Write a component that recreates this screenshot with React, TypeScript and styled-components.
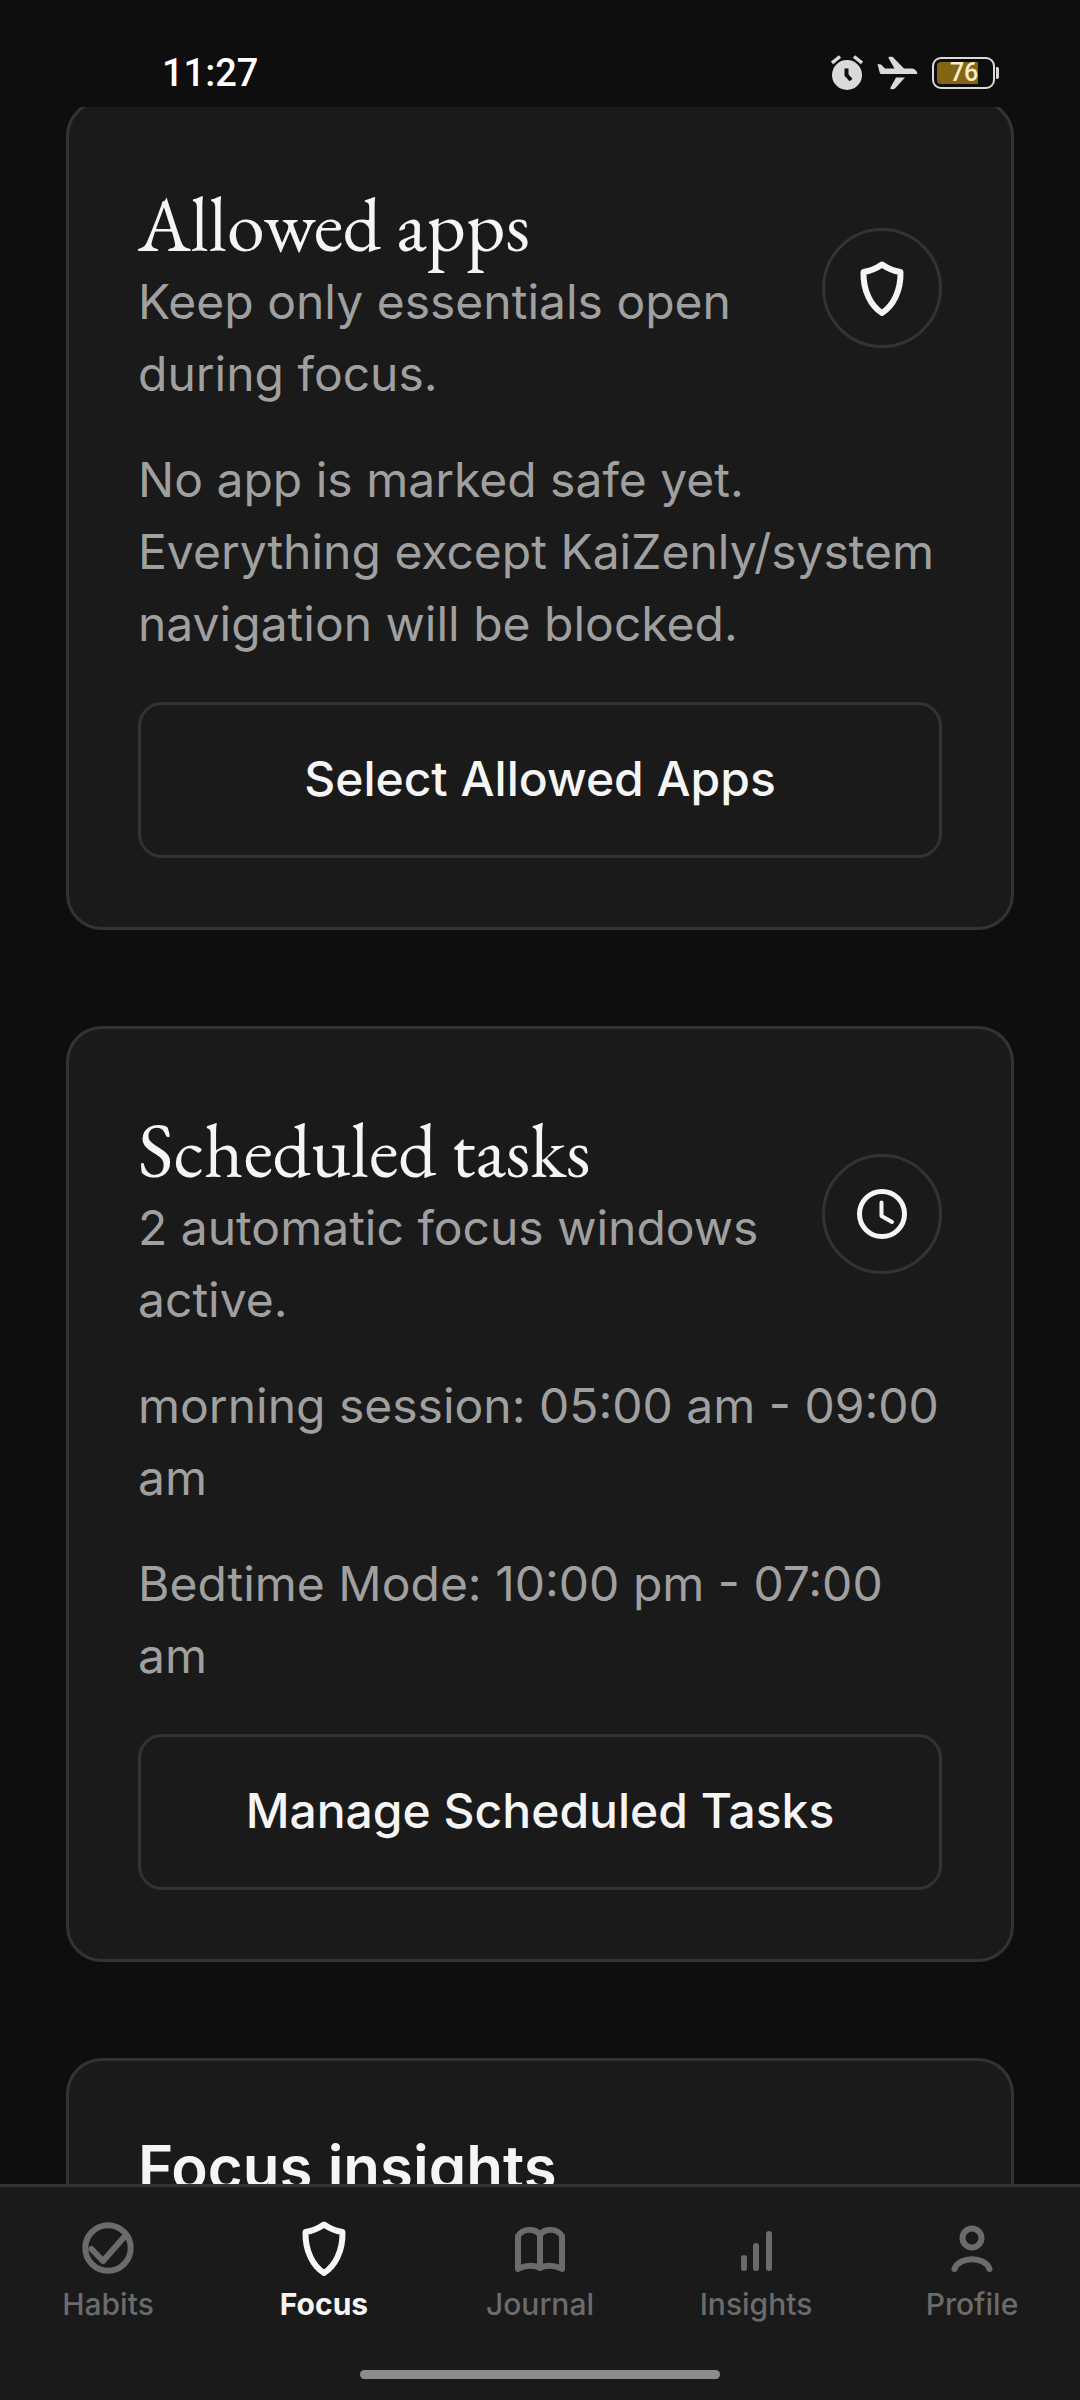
import React from "react";
import styled, { createGlobalStyle } from "styled-components";

const color = {
  page: "#0e0e0e",
  surface: "#1a1a1a",
  border: "#333333",
  text: "#f5f5f5",
  muted: "#a0a0a0",
  faint: "#6b6b6b",
  status: "#dadada",
};

const GlobalStyle = createGlobalStyle`
  *, *::before, *::after { box-sizing: border-box; }
  html, body, #root { height: 100%; }
  body {
    margin: 0;
    background: ${color.page};
    color: ${color.text};
    font-family: Inter, "Liberation Sans", sans-serif;
  }
  h2, p { margin: 0; }
`;

const Screen = styled.div`
  display: flex;
  flex-direction: column;
  height: 100vh;
  overflow: hidden;
`;

const StatusBar = styled.header`
  flex: none;
  display: flex;
  align-items: center;
  justify-content: space-between;
  height: 107px;
  padding: 38px 81px 0 162px;
  font-family: Roboto, "Liberation Sans", sans-serif;
`;

const Clock = styled.time`
  font-size: 38px;
  line-height: 44px;
  font-weight: 500;
  color: #ffffff;
`;

const StatusIcons = styled.div`
  display: flex;
  align-items: center;
  gap: 14px;
  color: ${color.status};
  svg { display: block; }
`;

const Battery = styled.div`
  display: flex;
  align-items: center;
  gap: 1px;
  &::after {
    content: "";
    width: 3px;
    height: 12px;
    border-radius: 0 2px 2px 0;
    background: ${color.status};
  }
`;

const BatteryCase = styled.div`
  width: 63px;
  height: 32px;
  padding: 3px;
  border: 2px solid ${color.status};
  border-radius: 9px;
`;

const BatteryLevel = styled.div`
  display: flex;
  align-items: center;
  justify-content: flex-end;
  width: 78%;
  height: 100%;
  border-radius: 4px 0 0 4px;
  background: #856414;
  color: #fbeccb;
  font-size: 25px;
  line-height: 22px;
  font-weight: 500;
`;

const Scroll = styled.main`
  flex: 1;
  min-height: 0;
  overflow: hidden;
`;

const CardList = styled.div`
  display: flex;
  flex-direction: column;
  gap: 96px;
  margin-top: -7px;
  padding: 0 66px;
`;

const Card = styled.section`
  padding: 69px;
  border: 3px solid ${color.border};
  border-radius: 36px;
  background: ${color.surface};
`;

const CardHeader = styled.div`
  display: flex;
  align-items: flex-start;
  gap: 36px;
`;

const Heading = styled.div`
  flex: 1;
  min-width: 0;
`;

const Title = styled.h2`
  padding-top: 10px;
  font-family: "EB Garamond", "Liberation Serif", serif;
  font-size: 76px;
  line-height: 84px;
  font-weight: 400;
`;

const SansTitle = styled.h2`
  font-size: 60px;
  line-height: 74px;
  font-weight: 600;
`;

const Text = styled.p`
  font-size: 48px;
  line-height: 72px;
  color: ${color.muted};
`;

const Notes = styled.div`
  display: flex;
  flex-direction: column;
  gap: 34px;
  padding: 34px 0 42px;
`;

const IconRing = styled.div`
  flex: none;
  display: grid;
  place-items: center;
  width: 120px;
  height: 120px;
  margin-top: 56px;
  border: 3px solid ${color.border};
  border-radius: 50%;
`;

const OutlineButton = styled.button`
  display: block;
  width: 100%;
  height: 156px;
  padding: 0 24px 3px;
  border: 3px solid ${color.border};
  border-radius: 24px;
  background: transparent;
  color: ${color.text};
  font: inherit;
  font-size: 48px;
  font-weight: 500;
  cursor: pointer;
`;

const TabBar = styled.nav`
  flex: none;
  display: flex;
  flex-direction: column;
  align-items: center;
  justify-content: space-between;
  height: 216px;
  padding: 28px 0 21px;
  border-top: 3px solid ${color.border};
  background: ${color.surface};
`;

const Tabs = styled.div`
  display: grid;
  grid-template-columns: repeat(5, 1fr);
  width: 100%;
`;

const Tab = styled.a<{ $active?: boolean }>`
  display: flex;
  flex-direction: column;
  align-items: center;
  gap: 5px;
  color: ${(p) => (p.$active ? color.text : color.faint)};
  font-size: 30px;
  line-height: 36px;
  font-weight: ${(p) => (p.$active ? 700 : 500)};
  text-decoration: none;
`;

const HomeIndicator = styled.div`
  width: 360px;
  height: 9px;
  border-radius: 5px;
  background: #8c8c8c;
`;

const StrokeIcon = styled.svg`
  display: block;
  width: 66px;
  height: 66px;
  fill: none;
  stroke: currentColor;
  stroke-width: 6;
  stroke-linecap: round;
  stroke-linejoin: round;
`;

type IconProps = { children: React.ReactNode };

const Icon = ({ children }: IconProps) => (
  <StrokeIcon viewBox="0 0 66 66" aria-hidden="true">
    {children}
  </StrokeIcon>
);

const ShieldIcon = () => (
  <Icon>
    <path d="M33 9.500C38 13 45 16 51.500 17C52 36 44 51 33 58C22 51 14 36 14.500 17C21 16 28 13 33 9.500Z" />
  </Icon>
);

const ClockIcon = () => (
  <Icon>
    <circle cx="33" cy="33" r="22.5" strokeWidth="5" />
    <path d="M32.5 21.5V35L43 41" strokeWidth="4" />
  </Icon>
);

const HabitsIcon = () => (
  <Icon>
    <circle cx="33" cy="33" r="22.7" />
    <path d="M16.5 34L28 46L50 21" />
  </Icon>
);

const JournalIcon = () => (
  <Icon>
    <path d="M11 54V21C16 13 28 13 33 20C38 13 50 13 55 21V54C48 50 38 50 33 53C28 50 18 50 11 54ZM33 20V53" />
  </Icon>
);

const InsightsIcon = () => (
  <Icon>
    <path d="M21 43V53M33 31V53M46 19V53" />
  </Icon>
);

const ProfileIcon = () => (
  <Icon>
    <circle cx="33" cy="23" r="9.5" />
    <path d="M15.5 54C20 41 46 41 50.5 54" />
  </Icon>
);

const AlarmIcon = () => (
  <svg width="32" height="35" viewBox="0 0 32 35" aria-hidden="true">
    <circle cx="16" cy="20" r="15" fill="currentColor" />
    <path d="M1 8L9 1.5M31 8L23 1.5" stroke="currentColor" strokeWidth="3.5" />
    <path d="M15.5 13.5V20L20 25" fill="none" stroke={color.page} strokeWidth="4" />
  </svg>
);

const PlaneIcon = () => (
  <svg width="41" height="34" viewBox="0 0 41 34" aria-hidden="true">
    <path
      fill="currentColor"
      d="M0.5 8L4 8.500L8 12.500H17.500L11.500 2Q11 1 12.500 0.800H15.500L27 12.500H35Q39.500 13 40.500 18H4.500Q3 18 2.700 16.500ZM19 21.500H28L18 32.500Q17 33.500 14.500 33.200Q12.800 33 13.500 31.500Z"
    />
  </svg>
);

const tabs = [
  { label: "Habits", icon: <HabitsIcon /> },
  { label: "Focus", icon: <ShieldIcon />, active: true },
  { label: "Journal", icon: <JournalIcon /> },
  { label: "Insights", icon: <InsightsIcon /> },
  { label: "Profile", icon: <ProfileIcon /> },
];

type FocusCardProps = {
  title: string;
  summary: string;
  icon: React.ReactNode;
  notes: string[];
  action: string;
};

const FocusCard = ({ title, summary, icon, notes, action }: FocusCardProps) => (
  <Card>
    <CardHeader>
      <Heading>
        <Title>{title}</Title>
        <Text>{summary}</Text>
      </Heading>
      <IconRing>{icon}</IconRing>
    </CardHeader>
    <Notes>
      {notes.map((note) => (
        <Text key={note}>{note}</Text>
      ))}
    </Notes>
    <OutlineButton type="button">{action}</OutlineButton>
  </Card>
);

export default function App() {
  return (
    <Screen>
      <GlobalStyle />
      <StatusBar>
        <Clock>11:27</Clock>
        <StatusIcons>
          <AlarmIcon />
          <PlaneIcon />
          <Battery>
            <BatteryCase>
              <BatteryLevel>76</BatteryLevel>
            </BatteryCase>
          </Battery>
        </StatusIcons>
      </StatusBar>
      <Scroll>
        <CardList>
          <FocusCard
            title="Allowed apps"
            summary="Keep only essentials open during focus."
            icon={<ShieldIcon />}
            notes={[
              "No app is marked safe yet. Everything except KaiZenly/system navigation will be blocked.",
            ]}
            action="Select Allowed Apps"
          />
          <FocusCard
            title="Scheduled tasks"
            summary="2 automatic focus windows active."
            icon={<ClockIcon />}
            notes={[
              "morning session: 05:00 am - 09:00 am",
              "Bedtime Mode: 10:00 pm - 07:00 am",
            ]}
            action="Manage Scheduled Tasks"
          />
          <Card>
            <SansTitle>Focus insights</SansTitle>
          </Card>
        </CardList>
      </Scroll>
      <TabBar aria-label="Main">
        <Tabs>
          {tabs.map((tab) => (
            <Tab
              key={tab.label}
              href={`#${tab.label.toLowerCase()}`}
              $active={tab.active}
              aria-current={tab.active ? "page" : undefined}
            >
              {tab.icon}
              {tab.label}
            </Tab>
          ))}
        </Tabs>
        <HomeIndicator />
      </TabBar>
    </Screen>
  );
}
